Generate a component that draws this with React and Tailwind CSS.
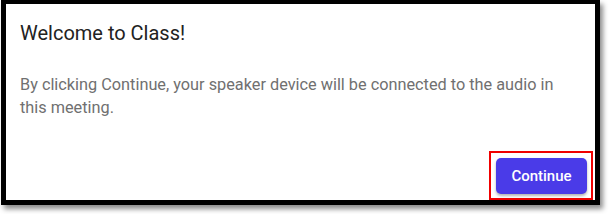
import React from 'react';

const App = () => {
  return (
    <div className="w-[609px] h-[214px] bg-white" style={{ fontFamily: 'Roboto, "Noto Sans", sans-serif' }}>
      <div className="ml-[1px] w-[599px] h-[205px] flex flex-col bg-white border-black border-t-4 border-x-[5px] border-b-[5px] shadow-[3px_4px_5px_rgba(0,0,0,0.45)]">
        <div className="pt-[15px] px-[14px]">
          <h2 className="text-[20px] leading-[28px] text-[#222222]">Welcome to Class!</h2>
          <p className="mt-[26px] max-w-[550px] text-[16.3px] leading-[23px] text-[#707070]">
            By clicking Continue, your speaker device will be connected to the audio in this meeting.
          </p>
        </div>
        <div className="mt-auto flex justify-end pr-[2px]">
          <div className="border-2 border-[#f00000] pt-[5px] pl-[5px] pr-[4px] pb-[4px]">
            <button className="w-[91px] h-[36px] rounded-[5px] bg-[#4a3be8] text-white text-[15px] font-medium shadow-[0_2px_3px_rgba(0,0,0,0.3)]">
              Continue
            </button>
          </div>
        </div>
      </div>
    </div>
  );
};

export default App;
